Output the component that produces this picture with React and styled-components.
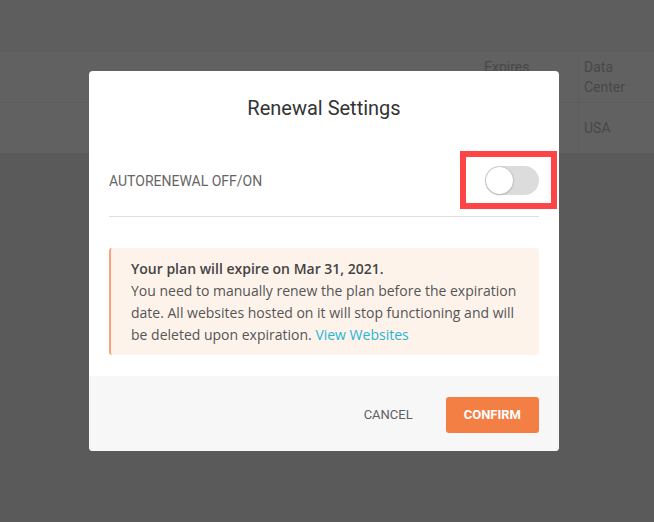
import React from "react";
import styled, { createGlobalStyle } from "styled-components";

const Global = createGlobalStyle`
  html, body { margin: 0; padding: 0; }
  body {
    width: 654px;
    height: 522px;
    overflow: hidden;
    background: #5a5a5a;
    font-family: Roboto, "Liberation Sans", sans-serif;
  }
`;

const Page = styled.div`
  position: relative;
  width: 654px;
  height: 522px;
  display: flex;
  flex-direction: column;
`;

const TopBar = styled.div`
  height: 52px;
  background: #5e5e5e;
`;

const Table = styled.div`
  background: #616161;
  display: flex;
  flex-direction: column;
`;

const TableRow = styled.div`
  height: ${(p) => p.$h}px;
  display: grid;
  grid-template-columns: 1fr 94px 76px;
  border-bottom: 1px solid #5c5c5c;
  font-size: 14px;
  line-height: 20px;
`;

const Cell = styled.div`
  padding-left: ${(p) => p.$pl || 0}px;
  padding-top: ${(p) => p.$pt || 0}px;
  border-left: ${(p) => (p.$line ? "1px solid #5d5d5d" : "none")};
  color: #484848;
`;

const Modal = styled.div`
  position: absolute;
  left: 89px;
  top: 71px;
  width: 470px;
  background: #fff;
  border-radius: 4px;
  overflow: hidden;
  display: flex;
  flex-direction: column;
`;

const Title = styled.h2`
  margin: 0;
  padding-top: 25px;
  text-align: center;
  font-family: Roboto, "Liberation Sans", sans-serif;
  font-weight: 400;
  font-size: 20px;
  line-height: 24px;
  color: #333;
`;

const Body = styled.div`
  padding: 32px 20px 21px;
  display: flex;
  flex-direction: column;
`;

const SettingRow = styled.div`
  display: flex;
  align-items: center;
  justify-content: space-between;
  padding: 14px 0 21px;
  border-bottom: 1px solid #dedede;
`;

const Label = styled.span`
  font-family: Roboto, "Liberation Sans", sans-serif;
  font-size: 14px;
  color: #666;
  text-transform: uppercase;
`;

const ToggleWrap = styled.div`
  position: relative;
  width: 54px;
  height: 29px;
`;

const Track = styled.div`
  width: 54px;
  height: 29px;
  border-radius: 15px;
  background: #dcdcdc;
  display: flex;
  align-items: center;
  padding: 0 1px;
  box-sizing: border-box;
`;

const Knob = styled.div`
  width: 27px;
  height: 27px;
  border-radius: 50%;
  background: #fff;
  box-shadow: 0 0 2px rgba(0, 0, 0, 0.25), 0 1px 2px rgba(0, 0, 0, 0.12);
`;

const Highlight = styled.div`
  position: absolute;
  left: -25px;
  top: -15px;
  width: 97px;
  height: 58px;
  box-sizing: border-box;
  border: 6px solid #fe4446;
  pointer-events: none;
`;

const Alert = styled.div`
  margin-top: 31px;
  background: #fdf3eb;
  border-left: 2px solid #f6a47f;
  border-radius: 3px;
  padding: 10px 16px 9px 20px;
  font-family: "Open Sans", "Liberation Sans", sans-serif;
  font-size: 14px;
  line-height: 22px;
  color: #555;
`;

const Strong = styled.div`
  font-weight: 600;
  color: #444;
`;

const Link = styled.a`
  color: #28b6d6;
  text-decoration: none;
`;

const Footer = styled.div`
  background: #f7f7f7;
  height: 75px;
  padding: 0 20px;
  display: flex;
  align-items: center;
  justify-content: flex-end;
  gap: 17px;
  box-sizing: border-box;
`;

const Button = styled.button`
  height: 36px;
  border: none;
  border-radius: 3px;
  padding: 0 ${(p) => (p.$primary ? 18 : 16)}px;
  background: ${(p) => (p.$primary ? "#f47f44" : "transparent")};
  color: ${(p) => (p.$primary ? "#fff" : "#606060")};
  font-family: Roboto, "Liberation Sans", sans-serif;
  font-size: 13px;
  font-weight: ${(p) => (p.$primary ? 700 : 400)};
  text-transform: uppercase;
  cursor: pointer;
  margin-top: 2px;
`;

export default function App() {
  return (
    <>
      <Global />
      <Page>
        <TopBar />
        <Table>
          <TableRow $h={50}>
            <Cell />
            <Cell $pt={5}>Expires</Cell>
            <Cell $pl={5} $pt={5} $line>Data<br />Center</Cell>
          </TableRow>
          <TableRow $h={50}>
            <Cell />
            <Cell />
            <Cell $pl={5} $pt={15} $line>USA</Cell>
          </TableRow>
        </Table>
        <Modal>
          <Title>Renewal Settings</Title>
          <Body>
            <SettingRow>
              <Label>Autorenewal off/on</Label>
              <ToggleWrap>
                <Track>
                  <Knob />
                </Track>
                <Highlight />
              </ToggleWrap>
            </SettingRow>
            <Alert>
              <Strong>Your plan will expire on Mar 31, 2021.</Strong>
              You need to manually renew the plan before the expiration date.
              All websites hosted on it will stop functioning and will be
              deleted upon expiration. <Link href="#">View Websites</Link>
            </Alert>
          </Body>
          <Footer>
            <Button>Cancel</Button>
            <Button $primary>Confirm</Button>
          </Footer>
        </Modal>
      </Page>
    </>
  );
}
